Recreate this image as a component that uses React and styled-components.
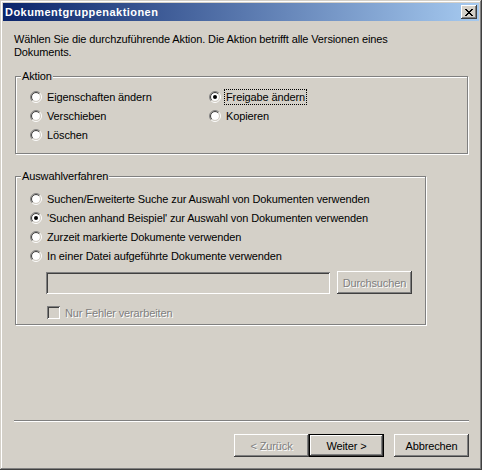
import React from 'react';
import styled, { createGlobalStyle, css } from 'styled-components';

const GlobalStyle = createGlobalStyle`
  html, body { margin: 0; padding: 0; background: #fff; }
  body {
    font-family: "Liberation Sans", Arial, sans-serif;
    font-size: 11px;
    letter-spacing: -0.12px;
    color: #000;
  }
`;

const raised = css`
  box-shadow: inset -1px -1px #404040, inset 1px 1px #fff,
    inset -2px -2px #808080, inset 2px 2px #d4d0c8;
`;

const sunken = css`
  box-shadow: inset 1px 1px #808080, inset -1px -1px #fff,
    inset 2px 2px #404040, inset -2px -2px #d4d0c8;
`;

const disabledText = css`
  color: #808080;
  text-shadow: 1px 1px 0 #fff;
`;

const Window = styled.div`
  width: 482px;
  height: 470px;
  box-sizing: border-box;
  padding: 3px;
  background: #d4d0c8;
  box-shadow: inset -1px -1px #404040, inset 1px 1px #d4d0c8,
    inset -2px -2px #808080, inset 2px 2px #fff;
  display: flex;
  flex-direction: column;
`;

const TitleBar = styled.div`
  height: 18px;
  flex: none;
  display: flex;
  align-items: center;
  padding: 0 2px;
  background: linear-gradient(to right, #0a246a, #a6caf0);
  color: #fff;
  font-weight: bold;
  font-size: 11px;
  letter-spacing: 0.45px;
`;

const Title = styled.span`
  flex: 1;
`;

const CloseButton = styled.div`
  width: 16px;
  height: 14px;
  background: #d4d0c8;
  ${raised};
  display: flex;
  align-items: center;
  justify-content: center;
`;

const Body = styled.div`
  padding: 12px 0 0 11px;
  display: flex;
  flex-direction: column;
`;

const Intro = styled.p`
  margin: 0;
  width: 400px;
  line-height: 13px;
`;

const GroupBox = styled.div`
  position: relative;
  box-sizing: border-box;
  margin: ${(p) => p.$top}px 0 0 1px;
  width: ${(p) => p.$w}px;
  height: ${(p) => p.$h}px;
  border: 1px solid #808080;
  box-shadow: inset 1px 1px #fff, 1px 1px 0 #fff;
  padding: ${(p) => p.$pt}px 0 0 14px;
`;

const GroupLabel = styled.span`
  position: absolute;
  top: -7px;
  left: 5px;
  padding: 0 1px;
  line-height: 13px;
  background: #d4d0c8;
`;

const ActionGrid = styled.div`
  display: grid;
  grid-template-columns: 179px auto;
  grid-auto-rows: 19px;
`;

const OptionList = styled.div`
  display: flex;
  flex-direction: column;
`;

const Row = styled.label`
  height: 19px;
  display: flex;
  align-items: center;
  gap: 5px;
`;

const RadioText = styled.span`
  line-height: 14px;
  padding: 0 1px;
  outline: ${(p) => (p.$focus ? '1px dotted #000' : 'none')};
  margin-left: -1px;
`;

const FileRow = styled.div`
  display: flex;
  gap: 7px;
  margin: 6px 0 0 16px;
`;

const TextField = styled.div`
  width: 284px;
  height: 22px;
  margin-top: 1px;
  background: #d4d0c8;
  ${sunken};
`;

const Button = styled.div`
  box-sizing: border-box;
  width: 75px;
  height: 23px;
  display: flex;
  align-items: center;
  justify-content: center;
  background: #d4d0c8;
  ${raised};
  ${(p) => p.$disabled && disabledText};
  ${(p) =>
    p.$default &&
    css`
      border: 1px solid #000;
      box-shadow: inset -1px -1px #404040, inset 1px 1px #fff,
        inset -2px -2px #808080, inset 2px 2px #d4d0c8;
    `};
`;

const CheckRow = styled.div`
  display: flex;
  align-items: center;
  gap: 5px;
  margin: 12px 0 0 17px;
  ${disabledText};
`;

const CheckBox = styled.div`
  width: 13px;
  height: 13px;
  background: #d4d0c8;
  ${sunken};
`;

const Footer = styled.div`
  margin-top: auto;
  padding: 0 10px 10px 11px;
  display: flex;
  flex-direction: column;
`;

const Separator = styled.div`
  height: 0;
  border-top: 1px solid #808080;
  border-bottom: 1px solid #fff;
`;

const ButtonBar = styled.div`
  display: flex;
  justify-content: flex-end;
  margin-top: 12px;
`;

const Spacer = styled.div`
  width: 10px;
`;

function Radio({ checked }) {
  const tl = (r) => {
    const d = r * 0.7071;
    return `M ${6 - d} ${6 + d} A ${r} ${r} 0 0 1 ${6 + d} ${6 - d}`;
  };
  const br = (r) => {
    const d = r * 0.7071;
    return `M ${6 + d} ${6 - d} A ${r} ${r} 0 0 1 ${6 - d} ${6 + d}`;
  };
  return (
    <svg width="12" height="12" viewBox="0 0 12 12" style={{ flex: 'none' }}>
      <circle cx="6" cy="6" r="4" fill="#fff" />
      <path d={tl(5.5)} stroke="#808080" fill="none" />
      <path d={br(5.5)} stroke="#fff" fill="none" />
      <path d={tl(4.5)} stroke="#404040" fill="none" />
      <path d={br(4.5)} stroke="#d4d0c8" fill="none" />
      {checked && <circle cx="6" cy="6" r="2" fill="#000" />}
    </svg>
  );
}

function CloseGlyph() {
  const px = [
    [0, 0], [1, 0], [6, 0], [7, 0],
    [1, 1], [2, 1], [5, 1], [6, 1],
    [2, 2], [3, 2], [4, 2], [5, 2],
    [3, 3], [4, 3],
    [2, 4], [3, 4], [4, 4], [5, 4],
    [1, 5], [2, 5], [5, 5], [6, 5],
    [0, 6], [1, 6], [6, 6], [7, 6],
  ];
  return (
    <svg width="8" height="7" viewBox="0 0 8 7" shapeRendering="crispEdges">
      {px.map(([x, y]) => (
        <rect key={`${x}-${y}`} x={x} y={y} width="1" height="1" fill="#000" />
      ))}
    </svg>
  );
}

const actions = [
  { label: 'Eigenschaften ändern' },
  { label: 'Freigabe ändern', checked: true, focus: true },
  { label: 'Verschieben' },
  { label: 'Kopieren' },
  { label: 'Löschen' },
];

const methods = [
  { label: 'Suchen/Erweiterte Suche zur Auswahl von Dokumenten verwenden' },
  { label: "'Suchen anhand Beispiel' zur Auswahl von Dokumenten verwenden", checked: true },
  { label: 'Zurzeit markierte Dokumente verwenden' },
  { label: 'In einer Datei aufgeführte Dokumente verwenden' },
];

export default function App() {
  return (
    <>
      <GlobalStyle />
      <Window>
        <TitleBar>
          <Title>Dokumentgruppenaktionen</Title>
          <CloseButton>
            <CloseGlyph />
          </CloseButton>
        </TitleBar>
        <Body>
          <Intro>
            Wählen Sie die durchzuführende Aktion. Die Aktion betrifft alle Versionen eines
            Dokuments.
          </Intro>

          <GroupBox $top={17} $w={453} $h={78} $pt={10}>
            <GroupLabel>Aktion</GroupLabel>
            <ActionGrid>
              {actions.map((a) => (
                <Row key={a.label}>
                  <Radio checked={a.checked} />
                  <RadioText $focus={a.focus}>{a.label}</RadioText>
                </Row>
              ))}
            </ActionGrid>
          </GroupBox>

          <GroupBox $top={22} $w={411} $h={149} $pt={12}>
            <GroupLabel>Auswahlverfahren</GroupLabel>
            <OptionList>
              {methods.map((m) => (
                <Row key={m.label}>
                  <Radio checked={m.checked} />
                  <RadioText>{m.label}</RadioText>
                </Row>
              ))}
            </OptionList>
            <FileRow>
              <TextField />
              <Button $disabled>Durchsuchen</Button>
            </FileRow>
            <CheckRow>
              <CheckBox />
              <span>Nur Fehler verarbeiten</span>
            </CheckRow>
          </GroupBox>
        </Body>

        <Footer>
          <Separator />
          <ButtonBar>
            <Button $disabled>&lt; Zurück</Button>
            <Button $default>Weiter &gt;</Button>
            <Spacer />
            <Button>Abbrechen</Button>
          </ButtonBar>
        </Footer>
      </Window>
    </>
  );
}
